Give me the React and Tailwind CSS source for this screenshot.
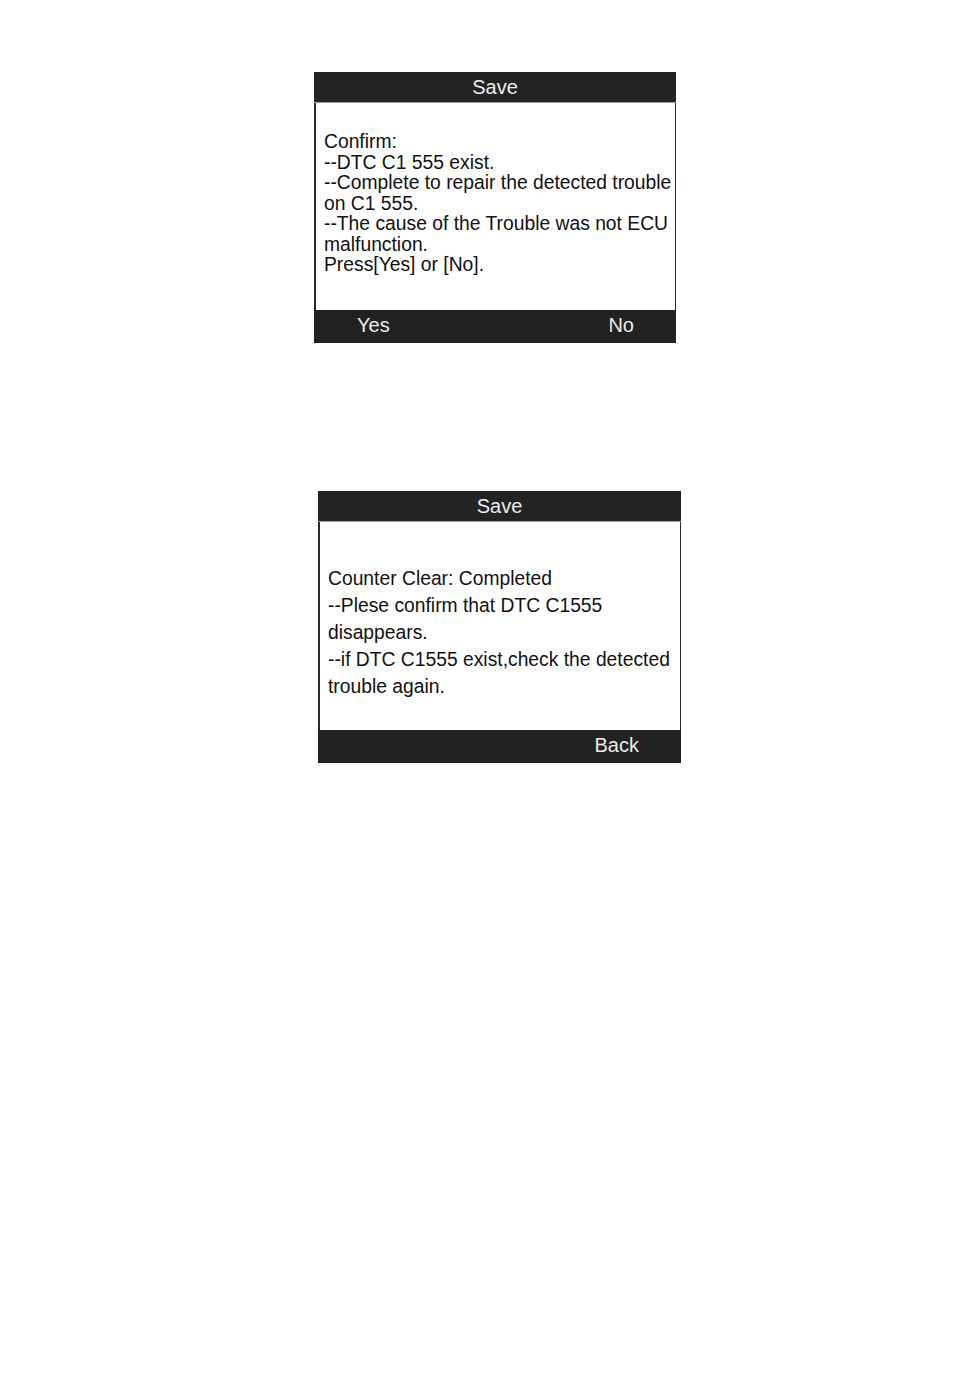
import React from 'react';

const font = { fontFamily: '"Liberation Sans", Arial, sans-serif' };

const Screen = ({ className, bodyClass, lines, left, right }) => (
  <div className={`flex flex-col w-[362px] ${className}`}>
    <div className="h-[30px] bg-[#232323] text-[#ececec] text-[20px] leading-none flex items-center justify-center">
      Save
    </div>
    <div className="h-px bg-[#9a9a9a]" />
    <div className={`flex-1 bg-white border-l-2 border-r border-[#2a2a2a] pl-[8px] text-[19.3px] text-[#111111] ${bodyClass}`}>
      {lines.map((l, i) => (
        <div key={i} className="whitespace-nowrap">{l}</div>
      ))}
    </div>
    <div className="h-[33px] bg-[#222222] text-[#ececec] text-[20px] leading-none flex items-center justify-between pl-[43px] pr-[42px] pb-[3px]">
      <span>{left}</span>
      <span>{right}</span>
    </div>
  </div>
);

const App = () => {
  return (
    <div className="w-[954px] min-h-[1374px] bg-white flex flex-col" style={font}>
      <Screen
        className="ml-[314px] mt-[72px] h-[271px]"
        bodyClass="pt-[29px] leading-[20.5px]"
        lines={[
          'Confirm:',
          '--DTC C1 555 exist.',
          '--Complete to repair the detected trouble',
          'on C1 555.',
          '--The cause of the Trouble was not ECU',
          'malfunction.',
          'Press[Yes] or [No].',
        ]}
        left="Yes"
        right="No"
      />
      <Screen
        className="ml-[318px] mt-[148px] h-[272px] w-[363px]"
        bodyClass="pt-[43px] leading-[27px]"
        lines={[
          'Counter Clear: Completed',
          '--Plese confirm that DTC C1555',
          'disappears.',
          '--if DTC C1555 exist,check the detected',
          'trouble again.',
        ]}
        left=""
        right="Back"
      />
    </div>
  );
};

export default App;
